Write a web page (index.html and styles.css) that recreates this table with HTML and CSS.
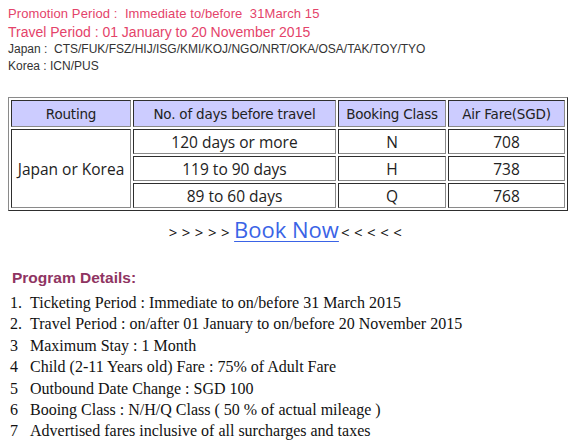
FILE: index.html
```html
<!DOCTYPE html>
<html>
<head>
<meta charset="utf-8">
<link rel="stylesheet" href="styles.css">
</head>
<body>
<div class="promo">
  <p class="hl hl-first">Promotion Period :&nbsp; Immediate to/before&nbsp; 31March 15</p>
  <p class="hl">Travel Period : 01 January to 20 November 2015</p>
  <p class="dest">Japan :&nbsp; CTS/FUK/FSZ/HIJ/ISG/KMI/KOJ/NGO/NRT/OKA/OSA/TAK/TOY/TYO</p>
  <p class="dest">Korea : ICN/PUS</p>
</div>
<table class="fares">
  <colgroup>
    <col class="c1"><col class="c2"><col class="c3"><col class="c4">
  </colgroup>
  <tr class="head">
    <th>Routing</th><th>No. of days before travel</th><th>Booking Class</th><th>Air Fare(SGD)</th>
  </tr>
  <tr>
    <td rowspan="3">Japan or Korea</td><td>120 days or more</td><td>N</td><td>708</td>
  </tr>
  <tr>
    <td>119 to 90 days</td><td>H</td><td>738</td>
  </tr>
  <tr>
    <td>89 to 60 days</td><td>Q</td><td>768</td>
  </tr>
</table>
<div class="book"><span class="arrows">&gt;&gt;&gt;&gt;&gt;</span><a href="#" class="book-link">Book Now</a><span class="arrows">&lt;&lt;&lt;&lt;&lt;</span></div>
<h3 class="details-title">Program Details:</h3>
<ol class="details">
  <li><span class="num">1.</span>Ticketing Period : Immediate to on/before 31 March 2015</li>
  <li><span class="num">2.</span>Travel Period : on/after 01 January to on/before 20 November 2015</li>
  <li><span class="num">3</span>Maximum Stay : 1 Month</li>
  <li><span class="num">4</span>Child (2-11 Years old) Fare : 75% of Adult Fare</li>
  <li><span class="num">5</span>Outbound Date Change : SGD 100</li>
  <li><span class="num">6</span>Booing Class : N/H/Q Class ( 50 % of actual mileage )</li>
  <li><span class="num">7</span>Advertised fares inclusive of all surcharges and taxes</li>
</ol>
</body>
</html>
```
FILE: styles.css
```css
html, body {
  margin: 0;
  padding: 0;
  background: #ffffff;
}
body {
  padding: 5px 8px 0 8px;
  font-family: "Liberation Sans", Arial, sans-serif;
}
.promo p {
  margin: 0;
}
.hl {
  color: #e4436a;
  font-size: 14px;
  line-height: 18px;
}
.hl-first {
  font-size: 13px;
  letter-spacing: 0.1px;
}
.dest {
  color: #333333;
  font-size: 12px;
  line-height: 17px;
}
.fares {
  margin-top: 22px;
  width: 560px;
  table-layout: fixed;
  border-collapse: separate;
  border-spacing: 2px;
  border: 1px solid;
  border-color: #8a8a8a #2e2e2e #2e2e2e #8a8a8a;
}
.c1 { width: 120px; }
.c2 { width: 203px; }
.c3 { width: 108px; }
.c4 { width: 117px; }
.fares th, .fares td {
  box-sizing: border-box;
  border: 1px solid;
  border-color: #2e2e2e #8a8a8a #8a8a8a #2e2e2e;
  text-align: center;
  padding: 0;
  color: #222222;
}
.fares th {
  height: 27px;
  background: #ccccff;
  font-family: "DejaVu Sans", sans-serif;
  font-weight: normal;
  font-size: 13.5px;
  letter-spacing: -0.2px;
}
.fares td {
  height: 25px;
  font-family: "Open Sans", sans-serif;
  font-size: 15.5px;
}
.book {
  display: flex;
  justify-content: center;
  align-items: baseline;
  margin-top: 3px;
  margin-left: -8px;
  margin-right: -8px;
  line-height: 30px;
}
.arrows {
  font-family: "Open Sans", sans-serif;
  font-size: 15px;
  letter-spacing: 4.5px;
  color: #111111;
}
.book-link {
  font-family: "Open Sans", sans-serif;
  font-size: 22px;
  color: #3a63e6;
  text-decoration: underline;
  text-decoration-thickness: 1px;
  text-underline-offset: 3px;
  margin-right: 2px;
}
.details-title {
  margin: 21px 0 0 4px;
  font-size: 15.5px;
  font-weight: bold;
  color: #8f3462;
  line-height: 20px;
}
.details {
  list-style: none;
  margin: 4px 0 0 0;
  padding: 0;
  font-family: "Liberation Serif", "Times New Roman", serif;
  font-size: 16px;
  line-height: 21.4px;
  color: #111111;
}
.details li {
  display: flex;
}
.num {
  width: 22px;
  padding-left: 2px;
  box-sizing: border-box;
  flex: none;
}
```
